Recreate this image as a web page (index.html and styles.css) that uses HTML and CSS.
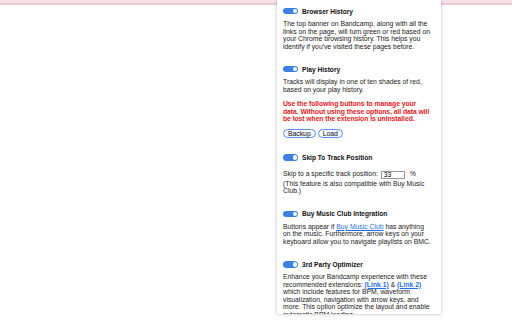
FILE: index.html
```html
<!DOCTYPE html>
<html>
<head>
	<title>Bandcamp Options</title>
	<link rel="stylesheet" href="styles.css">
</head>
<body>
	<div class="topbar"></div>
	<div class="popup">
		<div class="inner">
			<div class="option">
				<div class="head"><span class="switch"></span>Browser History</div>
				<p>The top banner on Bandcamp, along with all the links on the page, will turn green or red based on your Chrome browsing history. This helps you identify if you've visited these pages before.</p>
			</div>

			<div class="option">
				<div class="head"><span class="switch"></span>Play History</div>
				<p>Tracks will display in one of ten shades of red, based on your play history.</p>
				<p class="warn">Use the following buttons to manage your data. Without using these options, all data will be lost when the extension is uninstalled.</p>
				<div class="buttons">
					<button class="btn">Backup</button>
					<button class="btn">Load</button>
				</div>
			</div>

			<div class="option">
				<div class="head"><span class="switch"></span>Skip To Track Position</div>
				<div class="skip">Skip to a specific track position: <input type="text" class="pos" value="33"> <span class="pct">%</span></div>
				<p class="tight">(This feature is also compatible with Buy Music Club.)</p>
			</div>

			<div class="option">
				<div class="head"><span class="switch"></span>Buy Music Club Integration</div>
				<p>Buttons appear if <a href="#">Buy Music Club</a> has anything on the music. Furthermore, arrow keys on your keyboard allow you to navigate playlists on BMC.</p>
			</div>

			<div class="option">
				<div class="head"><span class="switch"></span>3rd Party Optimizer</div>
				<p>Enhance your Bandcamp experience with these recommended extensions: <a href="#" class="strong">(Link 1)</a> &amp; <a href="#" class="strong">(Link 2)</a> which include features for BPM, waveform visualization, navigation with arrow keys, and more. This option optimize the layout and enable automatic BPM loading.</p>
			</div>
		</div>
	</div>
</body>
</html>
```

FILE: styles.css
```css
body {
  margin: 0;
  background: #fff;
  font-family: "Liberation Sans", Arial, sans-serif;
}

.topbar {
  height: 3px;
  background: #f5e1e5;
  border-bottom: 2px solid #eccad0;
}

/* extension popup laid over the page */
.popup {
  position: absolute;
  top: 0;
  left: 277px;
  width: 164px;
  height: 314px;
  overflow-y: scroll;
  background: #fff;
  box-shadow: 0 0 3px rgba(0, 0, 0, 0.3);
}

.popup::-webkit-scrollbar {
  width: 5px;
}
.popup::-webkit-scrollbar-track {
  background: #f1f1f1;
}
.popup::-webkit-scrollbar-thumb {
  background: #bdbdbd;
  border: 1px solid #f1f1f1;
  border-top-width: 3px;
  border-radius: 3px;
}

.inner {
  width: 148.5px;
  padding: 7.5px 0 60px 6px;
  color: #222;
  font-size: 6.8px;
}

.option {
  margin-bottom: 15.5px;
}

.head {
  display: flex;
  align-items: center;
  gap: 4px;
  height: 7px;
  font-size: 6.6px;
  font-weight: bold;
  color: #111;
}

.switch {
  position: relative;
  width: 15px;
  height: 6.5px;
  border-radius: 4px;
  background: #3b7fe9;
  flex-shrink: 0;
}
.switch::after {
  content: "";
  position: absolute;
  right: 1px;
  top: 1px;
  width: 4.5px;
  height: 4.5px;
  border-radius: 50%;
  background: #fff;
}

p {
  margin: 5.5px 0 0;
  line-height: 7.5px;
}

p.tight {
  margin-top: 0;
}

.warn {
  margin-top: 7.4px;
  color: #e3191b;
  font-weight: bold;
  letter-spacing: -0.06px;
}

.buttons {
  display: flex;
  gap: 2px;
  margin-top: 6.5px;
  margin-bottom: 3px;
}

.btn {
  height: 9px;
  padding: 0 4px;
  font-family: inherit;
  font-size: 6.8px;
  line-height: 7px;
  color: #111;
  background: #f3f6fc;
  border: 1px solid #5a90ee;
  border-radius: 5px;
}

.skip {
  margin-top: 8.5px;
  height: 10.5px;
  display: flex;
  align-items: center;
  line-height: 10.5px;
}

.pos {
  width: 24px;
  height: 8px;
  box-sizing: border-box;
  margin-left: 3px;
  padding: 0 2px;
  font-family: inherit;
  font-size: 6.8px;
  border: 1px solid #9a9a9a;
  border-radius: 0;
}

.pct {
  margin-left: 5px;
}

a {
  color: #1f6fe5;
}

a.strong {
  font-weight: bold;
}
```
